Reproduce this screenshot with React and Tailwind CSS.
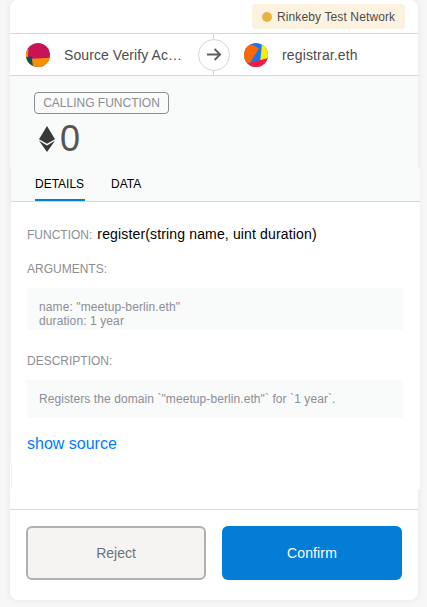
import React from "react";

function NetworkBadge() {
  return (
    <div className="flex h-[25px] w-[153px] items-center rounded-[4px] bg-[#fcf2e0] pl-[10px] text-[12px] text-[#4d4d4d]">
      <span className="mr-[5px] size-[10px] rounded-full bg-[#e9b344]" />
      <span className="tracking-[0.12px] whitespace-nowrap">Rinkeby Test Network</span>
    </div>
  );
}

function SenderIcon() {
  return (
    <svg className="size-6 shrink-0 rounded-full" viewBox="0 0 24 24">
      <rect width="24" height="24" fill="#c81456" />
      <path d="M0 5L2.4 6.5L1.8 16L24 14.8V24H0Z" fill="#f29202" />
      <path d="M0 14.2L5.6 13.2L7 24H0Z" fill="#03555c" />
    </svg>
  );
}

function RecipientIcon() {
  return (
    <svg className="size-6 shrink-0 rounded-full" viewBox="0 0 24 24">
      <rect width="24" height="24" fill="#1876f2" />
      <path d="M18 0L16.3 17.5L24 15V0Z" fill="#f6ee00" />
      <path d="M0 0H5L15 5.5L5.8 20L0 22Z" fill="#fb6802" />
      <path d="M3 20.6L24 15.2V24H3Z" fill="#fc1938" />
    </svg>
  );
}

function Parties() {
  return (
    <div className="flex h-[43px] items-center border-y border-[#d2d8dd] text-[14px] text-[#4d4d4d]">
      <div className="flex w-[188px] items-center pl-4">
        <SenderIcon />
        <span className="ml-[14px] w-[119px] pt-px tracking-[0.08px] whitespace-nowrap">Source Verify Ac…</span>
      </div>
      <div className="flex h-[41px] w-8 flex-col items-center">
        <span className="mr-px h-[5px] w-px bg-[#d2d8dd]" />
        <span className="flex size-8 shrink-0 items-center justify-center rounded-full border border-[#d2d8dd]">
          <svg width="16" height="14" viewBox="0 0 16 14" fill="none" stroke="#5b5d60" strokeWidth="1.9">
            <path d="M1 6.5H14M8.6 1L14.1 6.5L8.6 12" />
          </svg>
        </span>
        <span className="mr-px h-[4px] w-px bg-[#d2d8dd]" />
      </div>
      <div className="flex items-center pl-[14px]">
        <RecipientIcon />
        <span className="ml-[14px] pt-px tracking-[0.14px]">registrar.eth</span>
      </div>
    </div>
  );
}

function Ether() {
  return (
    <svg width="16" height="26" viewBox="0 0 16 26" className="mt-[5px] mr-[5px]">
      <path d="M8 0L16 13.2L8 17.8L0 13.2Z" fill="#393939" />
      <path d="M0 14.7L8 19.4L16 14.7L8 26Z" fill="#393939" />
    </svg>
  );
}

export default function App() {
  return (
    <main className="h-[607px] w-[427px] overflow-hidden bg-[#f7f7f7] px-[10px] font-['Liberation_Sans',Arial,sans-serif]">
      <div className="h-[600px] w-[408px] rounded-[8px] bg-white shadow-[0_0_7px_rgba(0,0,0,0.08)]">
        <header className="flex h-[33px] justify-end pt-1 pr-[13px]">
          <NetworkBadge />
        </header>
        <Parties />
        <section className="h-[92px] bg-[#f9fafa] pt-4 pl-6">
          <div className="flex h-[22px] w-[135px] items-center justify-center rounded-[4px] border border-[#8c8e94] text-[12px] whitespace-nowrap text-[#8c8e94]">
            CALLING FUNCTION
          </div>
          <div className="mt-[7px] flex h-9 pl-[5px] text-[36px] leading-[36px] text-[#555555]">
            <Ether />
            <span>0</span>
          </div>
        </section>

        <section className="h-[296px] w-[410px] border-l border-[#efefef] bg-white">
          <nav className="flex h-[34px] gap-[26px] border-b border-[#d2d8dd] bg-[#f9fafa] pl-6 text-[12px] text-black">
            <span className="h-[33px] w-[50px] border-b-2 border-[#037dd6] pt-[8px] leading-4">DETAILS</span>
            <span className="pt-[8px] leading-4">DATA</span>
          </nav>
          <div className="pr-4 pl-4 text-[12px] text-[#8c8e94]">
            <div className="flex items-baseline gap-[5px] pt-[22px] leading-5">
              <span>FUNCTION:</span>
              <span className="text-[14px] tracking-[0.15px] whitespace-nowrap text-black">register(string name, uint duration)</span>
            </div>
            <div className="mt-[16px] leading-4">ARGUMENTS:</div>
            <div className="mt-[11px] h-[42px] w-[376px] bg-[#f9fafa] pt-[12px] pl-3 leading-[14px] tracking-[0.1px]">
              <div>name: "meetup-berlin.eth"</div>
              <div>duration: 1 year</div>
            </div>
            <div className="mt-[23px] leading-4">DESCRIPTION:</div>
            <div className="mt-[11px] h-[38px] w-[376px] bg-[#f9fafa] pt-[12px] pl-3 leading-[14px] tracking-[0.08px]">
              Registers the domain `"meetup-berlin.eth"` for `1 year`.
            </div>
            <a className="mt-[14px] block text-[16px] leading-6 text-[#007bff]">show source</a>
          </div>
        </section>
        <div className="h-[25px] w-[410px] bg-white pl-px">
          <div className="h-full border-l border-[#efefef]" />
        </div>

        <footer className="mt-5 flex gap-4 border-t border-[#d5d8da] px-4 pt-4 text-[14px]">
          <button className="h-[54px] w-[180px] rounded-[6px] border-2 border-[#b0b0b0] bg-[#f5f4f2] text-[#6a737d]">Reject</button>
          <button className="h-[54px] w-[180px] rounded-[6px] bg-[#037dd6] tracking-[0.12px] text-white">Confirm</button>
        </footer>
      </div>
    </main>
  );
}
